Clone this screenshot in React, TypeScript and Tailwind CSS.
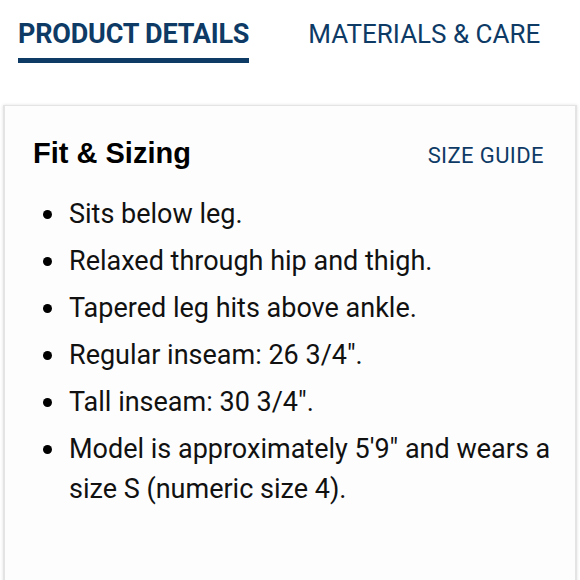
import React from 'react';

const fitItems = [
  'Sits below leg.',
  'Relaxed through hip and thigh.',
  'Tapered leg hits above ankle.',
  'Regular inseam: 26 3/4".',
  'Tall inseam: 30 3/4".',
  'Model is approximately 5\'9" and wears a size S (numeric size 4).',
];

export default function App() {
  return (
    <div className="w-[580px] h-[580px] overflow-hidden bg-white font-['Roboto',sans-serif]">
      <nav className="flex items-start gap-[59px] pl-[18px] pt-[18px]">
        <div className="flex flex-col">
          <span className="text-[27px] leading-[32px] font-bold tracking-[-0.2px] text-[#0e3a66]">PRODUCT DETAILS</span>
          <span className="mt-[8px] h-[5px] bg-[#0e3a66]" />
        </div>
        <span className="text-[26px] leading-[32px] text-[#0e3a66]">MATERIALS &amp; CARE</span>
      </nav>

      <section className="mt-[42px] ml-[3px] mr-[3px] h-[600px] bg-[#fdfdfd] border-l-2 border-t border-r-2 border-[#e4e4e4] shadow-[0_0_3px_rgba(0,0,0,0.12)]">
        <div className="flex items-baseline justify-between pl-[28px] pr-[31px] pt-[30px]">
          <h2 className="font-['Liberation_Sans',sans-serif] text-[29px] leading-[34px] font-bold text-black">Fit &amp; Sizing</h2>
          <a className="text-[22px] leading-[34px] tracking-[0.4px] text-[#0e3a66]">SIZE GUIDE</a>
        </div>
        <ul className="mt-[21px] pl-[38px] pr-[20px] flex flex-col gap-[7px]">
          {fitItems.map((item) => (
            <li key={item} className="flex items-start text-[27px] leading-[40px] text-[#111]">
              <span className="mt-[16px] w-[9px] h-[9px] rounded-full bg-black shrink-0" />
              <span className="ml-[17px]">{item}</span>
            </li>
          ))}
        </ul>
      </section>
    </div>
  );
}
